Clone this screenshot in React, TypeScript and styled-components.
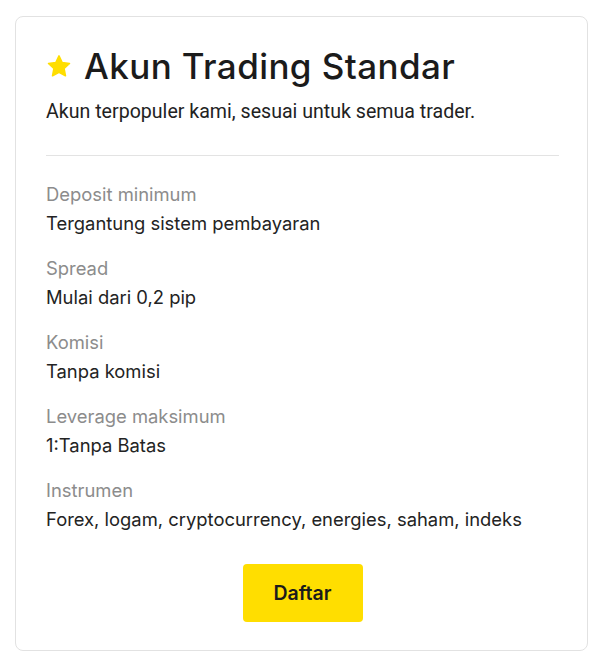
import React from 'react';
import styled, { createGlobalStyle } from 'styled-components';

const GlobalStyle = createGlobalStyle`
  body {
    margin: 0;
    background: #ffffff;
    font-family: 'Inter', 'Liberation Sans', sans-serif;
  }
`;

const Page = styled.div`
  padding: 16px 16px 0 15px;
`;

const Card = styled.section`
  box-sizing: border-box;
  width: 573px;
  height: 635px;
  border: 1px solid #e2e2e2;
  border-radius: 8px;
  padding: 27px 28px 0 30px;
  display: flex;
  flex-direction: column;
`;

const Title = styled.h2`
  margin: 0;
  display: flex;
  align-items: center;
  gap: 12px;
  font-family: 'Inter', sans-serif;
  font-size: 35px;
  font-weight: 500;
  letter-spacing: 0.4px;
  line-height: 44px;
  color: #1b1b1b;
`;

const Subtitle = styled.p`
  margin: 11px 0 0;
  font-family: 'Roboto', sans-serif;
  font-size: 19.6px;
  line-height: 26px;
  color: #222222;
`;

const Divider = styled.hr`
  margin: 30px 0 0;
  border: 0;
  border-top: 1px solid #e3e3e3;
`;

const Specs = styled.dl`
  margin: 26px 0 0;
  display: flex;
  flex-direction: column;
  gap: 20px;
`;

const Spec = styled.div`
  display: flex;
  flex-direction: column;
  gap: 4px;
`;

const Label = styled.dt`
  font-size: 18.4px;
  line-height: 25px;
  color: #8c8c8c;
`;

const Value = styled.dd`
  margin: 0;
  font-size: 18.4px;
  line-height: 25px;
  color: #232323;
`;

const Footer = styled.div`
  display: flex;
  justify-content: center;
  margin-top: 32px;
`;

const Button = styled.button`
  width: 120px;
  height: 58px;
  border: 0;
  border-radius: 4px;
  background: #ffde00;
  font-family: 'Inter', sans-serif;
  font-size: 19.5px;
  font-weight: 600;
  color: #1b1b1b;
  cursor: pointer;
`;

const Star = () => (
  <svg width="26" height="25" viewBox="0 0 24 24" aria-hidden="true">
    <path
      d="M12 1.8l3.05 6.4 7.02.9-5.17 4.86 1.32 6.95L12 17.5l-6.22 3.41 1.32-6.95L1.93 9.1l7.02-.9z"
      fill="#ffde00"
      stroke="#ffde00"
      strokeWidth="1.5"
      strokeLinejoin="round"
    />
  </svg>
);

const specs = [
  { label: 'Deposit minimum', value: 'Tergantung sistem pembayaran' },
  { label: 'Spread', value: 'Mulai dari 0,2 pip' },
  { label: 'Komisi', value: 'Tanpa komisi' },
  { label: 'Leverage maksimum', value: '1:Tanpa Batas' },
  { label: 'Instrumen', value: 'Forex, logam, cryptocurrency, energies, saham, indeks' },
];

export default function App() {
  return (
    <Page>
      <GlobalStyle />
      <Card>
        <Title>
          <Star />
          Akun Trading Standar
        </Title>
        <Subtitle>Akun terpopuler kami, sesuai untuk semua trader.</Subtitle>
        <Divider />
        <Specs>
          {specs.map((s) => (
            <Spec key={s.label}>
              <Label>{s.label}</Label>
              <Value>{s.value}</Value>
            </Spec>
          ))}
        </Specs>
        <Footer>
          <Button>Daftar</Button>
        </Footer>
      </Card>
    </Page>
  );
}
